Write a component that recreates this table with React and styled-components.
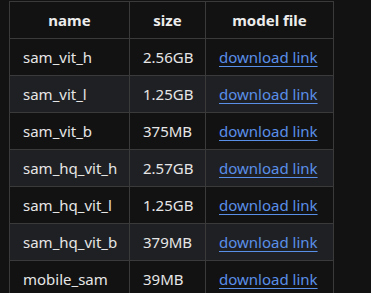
import React from "react";
import styled, { createGlobalStyle } from "styled-components";

const Global = createGlobalStyle`
  html, body {
    margin: 0;
    background: #121212;
  }
  body {
    padding: 1px 0 0 9px;
    font-family: "Noto Sans", "Open Sans", sans-serif;
    color: #e6e6e6;
  }
`;

const Table = styled.table`
  border-collapse: collapse;
  table-layout: fixed;
  width: 324px;
  font-size: 15px;
`;

const Col = styled.col`
  width: ${(p) => p.$w}px;
`;

const HeadRow = styled.tr`
  height: 37px;
`;

const Th = styled.th`
  padding: 0 13px;
  border: 1px solid #3a3a3a;
  font-weight: 700;
  text-align: center;
  color: #ececec;
`;

const Row = styled.tr`
  height: 37px;
  background: ${(p) => (p.$alt ? "#1f2023" : "#121212")};
`;

const Td = styled.td`
  padding: 0 13px;
  border: 1px solid #3a3a3a;
  white-space: nowrap;
`;

const Link = styled.a`
  color: #5a8fe8;
  text-decoration: underline;
  text-underline-offset: 3px;
`;

const models = [
  ["sam_vit_h", "2.56GB"],
  ["sam_vit_l", "1.25GB"],
  ["sam_vit_b", "375MB"],
  ["sam_hq_vit_h", "2.57GB"],
  ["sam_hq_vit_l", "1.25GB"],
  ["sam_hq_vit_b", "379MB"],
  ["mobile_sam", "39MB"],
];

export default function App() {
  return (
    <>
      <Global />
      <Table>
        <colgroup>
          <Col $w={120} />
          <Col $w={76} />
          <Col $w={128} />
        </colgroup>
        <thead>
          <HeadRow>
            <Th>name</Th>
            <Th>size</Th>
            <Th>model file</Th>
          </HeadRow>
        </thead>
        <tbody>
          {models.map(([name, size], i) => (
            <Row key={name} $alt={i % 2 === 1}>
              <Td>{name}</Td>
              <Td>{size}</Td>
              <Td>
                <Link href="#">download link</Link>
              </Td>
            </Row>
          ))}
        </tbody>
      </Table>
    </>
  );
}
